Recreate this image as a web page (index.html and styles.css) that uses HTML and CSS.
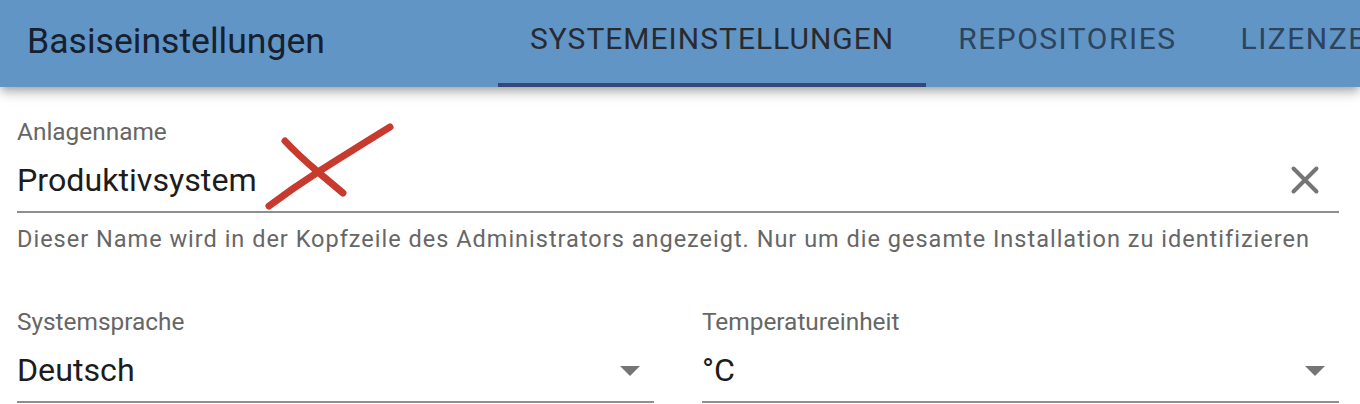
FILE: index.html
```html
<!DOCTYPE html>
<html lang="de">
<head>
<meta charset="utf-8">
<title>Basiseinstellungen</title>
<link rel="stylesheet" href="styles.css">
</head>
<body>
<header class="appbar">
  <h1 class="title">Basiseinstellungen</h1>
  <nav class="tabs">
    <a class="tab tab-active">SYSTEMEINSTELLUNGEN</a>
    <a class="tab">REPOSITORIES</a>
    <a class="tab">LIZENZEN</a>
  </nav>
</header>
<main class="content">
  <div class="field field-name">
    <label class="label">Anlagenname</label>
    <div class="control">
      <span class="value">Produktivsystem</span>
      <svg class="clear" width="32" height="32" viewBox="0 0 32 32"><path d="M4.5 4.5L27.5 27.5M27.5 4.5L4.5 27.5" fill="none" stroke="#757575" stroke-width="4" stroke-linecap="round"/></svg>
    </div>
    <p class="help">Dieser Name wird in der Kopfzeile des Administrators angezeigt. Nur um die gesamte Installation zu identifizieren</p>
    <svg class="cross" width="140" height="100" viewBox="0 0 140 100"><path d="M8 92Q32 74 57 58T129 13M24 27Q36 40 57 58L82 79" fill="none" stroke="#c8392e" stroke-width="7" stroke-linecap="round"/></svg>
  </div>
  <div class="row">
    <div class="field">
      <label class="label">Systemsprache</label>
      <div class="control">
        <span class="value">Deutsch</span>
        <span class="arrow"></span>
      </div>
    </div>
    <div class="field">
      <label class="label">Temperatureinheit</label>
      <div class="control">
        <span class="value">°C</span>
        <span class="arrow"></span>
      </div>
    </div>
  </div>
</main>
</body>
</html>
```

FILE: styles.css
```css
* { box-sizing: border-box; }
html, body { margin: 0; padding: 0; }
body {
  width: 1360px;
  height: 404px;
  overflow: hidden;
  background: #fff;
  font-family: Roboto, "Liberation Sans", sans-serif;
}
.appbar {
  display: flex;
  align-items: stretch;
  height: 87px;
  padding-left: 27px;
  background: #6095c6;
  box-shadow: 0 3.5px 7px -2px rgba(0, 0, 0, 0.2), 0 7px 9px rgba(0, 0, 0, 0.14), 0 2px 18px rgba(0, 0, 0, 0.12);
  position: relative;
  overflow: hidden;
}
.title {
  flex: none;
  width: 471px;
  margin: 0;
  padding-bottom: 6px;
  align-self: center;
  font-size: 35.6px;
  font-weight: 400;
  line-height: 40px;
  color: #16202e;
  white-space: nowrap;
}
.tabs { display: flex; flex: none; }
.tab {
  display: flex;
  align-items: flex-start;
  justify-content: center;
  padding: 22px 32px 0;
  height: 87px;
  font-size: 30px;
  line-height: 34px;
  letter-spacing: 1.5px;
  color: #2e435c;
  white-space: nowrap;
}
.tab-active {
  letter-spacing: 1px;
  color: #2a2a2e;
  border-bottom: 4px solid #34497a;
}
.content { padding: 32px 21px 0 17px; }
.field { position: relative; }
.label {
  display: block;
  font-size: 24.4px;
  line-height: 26px;
  color: #666;
}
.control {
  display: flex;
  align-items: center;
  justify-content: space-between;
  height: 68px;
  border-bottom: 2px solid #8f8f8f;
}
.value {
  font-size: 32.2px;
  line-height: 40px;
  color: #1c1c1c;
  padding-top: 4px;
}
.clear { margin-right: 18px; margin-top: 4px; }
.help {
  margin: 12px 0 0;
  font-size: 23.5px;
  line-height: 28px;
  letter-spacing: 1px;
  color: #666;
  white-space: nowrap;
}
.cross { position: absolute; left: 244px; top: -5px; }
.row {
  display: grid;
  grid-template-columns: 637px 637px;
  column-gap: 48px;
  margin-top: 56px;
}
.arrow {
  width: 0;
  height: 0;
  margin-right: 14px;
  margin-top: 6px;
  border-left: 10px solid transparent;
  border-right: 10px solid transparent;
  border-top: 10px solid #757575;
}
```
